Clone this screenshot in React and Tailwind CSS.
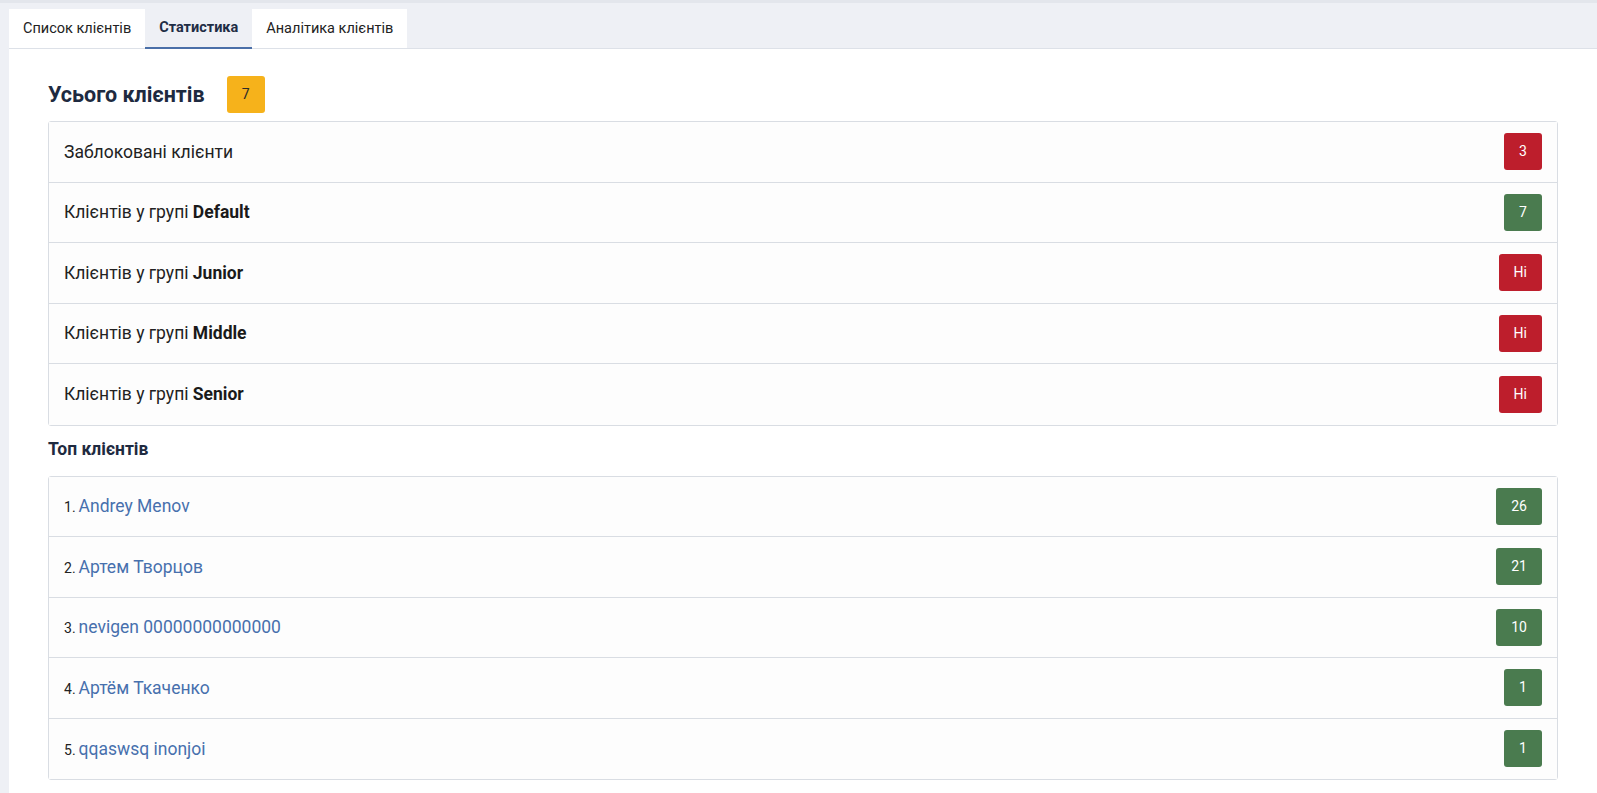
import React, { useState } from 'react'

const tabs = ["Список клієнтів", "Статистика", "Аналітика клієнтів"];

const groups = [
  { label: "Заблоковані клієнти", value: "3", color: "red" },
  { label: "Клієнтів у групі ", bold: "Default", value: "7", color: "green" },
  { label: "Клієнтів у групі ", bold: "Junior", value: "Ні", color: "red" },
  { label: "Клієнтів у групі ", bold: "Middle", value: "Ні", color: "red" },
  { label: "Клієнтів у групі ", bold: "Senior", value: "Ні", color: "red" },
];

const topClients = [
  { name: "Andrey Menov", count: 26 },
  { name: "Артем Творцов", count: 21 },
  { name: "nevigen 00000000000000", count: 10 },
  { name: "Артём Ткаченко", count: 1 },
  { name: "qqaswsq inonjoi", count: 1 },
];

// small coloured counter on the right of each row
const Badge = ({ color, children }) => {
  const bg = color === 'red' ? 'bg-[#bd1e2c] text-white' : color === 'green' ? 'bg-[#4a7b4f] text-white' : 'bg-[#f6b21b] text-[#2a2a2a]';
  return (
    <span className={`${bg} inline-flex items-center justify-center h-[37px] min-w-[38px] px-[15px] rounded-[3px] text-[14px]`}>
      {children}
    </span>
  );
}

const App = () => {
  const [active, setActive] = useState(1);

  return (
    <div className="min-h-[793px] bg-[#eef0f5] border-t-[3px] border-[#e3e6ec] pt-[6px] pl-[9px]" style={{ fontFamily: 'Roboto, "Noto Sans", sans-serif' }}>
      {/* tabs */}
      <div className="flex border-b border-[#dde1e8] h-[40px]">
        {tabs.map((tab, i) => (
          <button
            key={tab}
            onClick={() => setActive(i)}
            className={i === active
              ? 'px-[14px] text-[14.5px] font-bold text-[#1f2d45] bg-[#eef0f5] border-b-2 border-[#4a6fa8] -mb-px'
              : 'px-[14px] text-[14.5px] text-[#222] bg-white'}
          >
            {tab}
          </button>
        ))}
      </div>

      <div className="bg-white px-[39px] pt-[27px] pb-[13px]">
        <div className="flex items-center gap-[22px]">
          <h1 className="text-[21.5px] font-bold text-[#1e2a40] leading-[37px]">Усього клієнтів</h1>
          <Badge color="amber">7</Badge>
        </div>

        <ul className="mt-[8px] border border-[#d9dde3] rounded-[3px] divide-y divide-[#d9dde3]">
          {groups.map((g) => (
            <li key={g.label + (g.bold || '')} className="flex items-center justify-between h-[60.5px] px-[15px] bg-[#fdfdfd]">
              <div className="text-[17.5px] text-[#222]">
                {g.label}{g.bold && <b className="font-bold text-[#1a1a1a]">{g.bold}</b>}
              </div>
              <Badge color={g.color}>{g.value}</Badge>
            </li>
          ))}
        </ul>

        <h2 className="mt-[11px] text-[17.5px] font-bold text-[#1e2a40] leading-[24px]">Топ клієнтів</h2>

        <ul className="mt-[15px] border border-[#d9dde3] rounded-[3px] divide-y divide-[#d9dde3]">
          {topClients.map((c, i) => (
            <li key={c.name} className="flex items-center justify-between h-[60.5px] px-[15px] bg-[#fdfdfd]">
              <div className="flex items-baseline">
                <span className="text-[14px] text-[#222] mr-[3px]">{i + 1}.</span>
                <a href="#" className="text-[17.5px] text-[#4770ad]">{c.name}</a>
              </div>
              <Badge color="green">{c.count}</Badge>
            </li>
          ))}
        </ul>
      </div>
    </div>
  )
}

export default App;
